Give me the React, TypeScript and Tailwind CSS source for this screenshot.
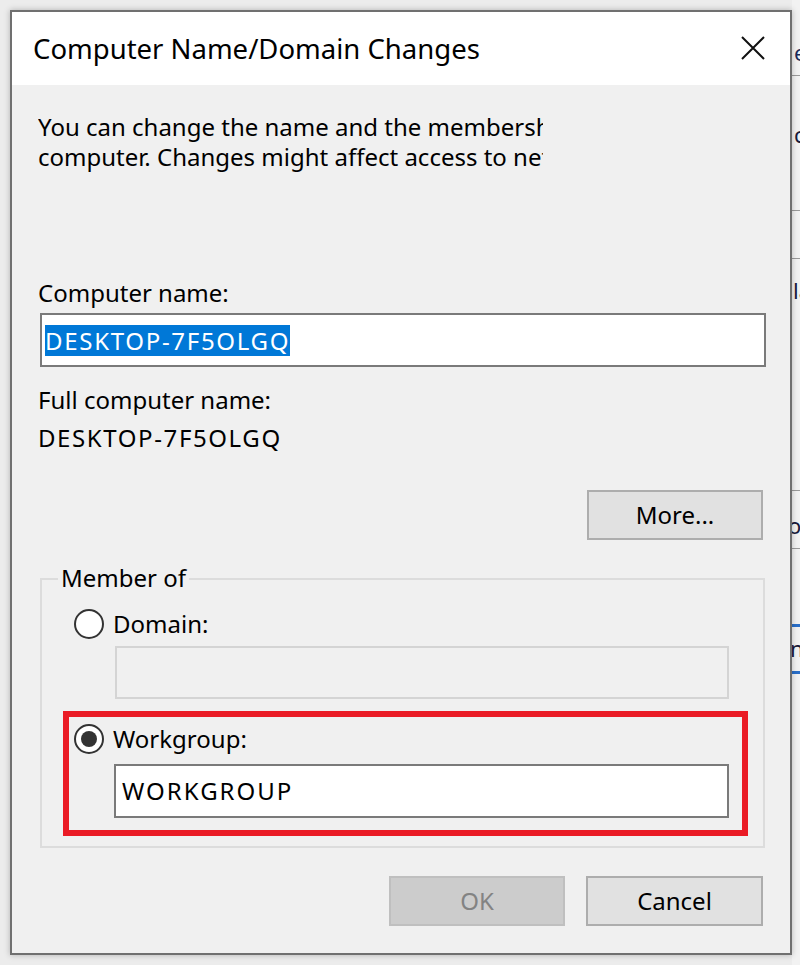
import React from "react";

function Radio({ checked }: { checked?: boolean }) {
  return (
    <div className="w-[30px] h-[30px] rounded-full border-2 border-[#333333] bg-white flex items-center justify-center shrink-0">
      {checked && <div className="w-[16px] h-[16px] rounded-full bg-[#333333]" />}
    </div>
  );
}

export default function App() {
  return (
    <div className="relative w-[800px] h-[965px] overflow-hidden bg-[#ececec] pt-[10px] pl-[10px] font-['Noto_Sans',sans-serif] text-black">
      {/* background window strip on the right */}
      <div className="absolute top-0 right-0 w-[8px] h-full bg-[#f2f2f2] overflow-hidden">
        <div className="absolute left-[2px] top-[40px] text-[22px] leading-[24px] text-[#1a2a5a]">er</div>
        <div className="absolute left-0 top-[75px] w-full h-[1px] bg-[#9a9a9a]" />
        <div className="absolute left-[2px] top-[122px] text-[22px] leading-[24px] text-[#1a1a3a]">c</div>
        <div className="absolute left-0 top-[210px] w-full h-[1px] bg-[#9a9a9a]" />
        <div className="absolute left-0 top-[258px] w-full h-[1px] bg-[#9a9a9a]" />
        <div className="absolute left-[1px] top-[278px] text-[22px] leading-[24px] text-[#1a1a3a]">la</div>
        <div className="absolute left-0 top-[490px] w-full h-[1px] bg-[#9a9a9a]" />
        <div className="absolute left-[-4px] top-[513px] text-[22px] leading-[24px] text-[#1a1a3a]">o</div>
        <div className="absolute left-0 top-[548px] w-full h-[1px] bg-[#9a9a9a]" />
        <div className="absolute left-0 top-[624px] w-full h-[3px] bg-[#2a6fc9]" />
        <div className="absolute left-[-2px] top-[636px] text-[22px] leading-[24px] text-[#1a1a3a]">n</div>
        <div className="absolute left-0 top-[671px] w-full h-[3px] bg-[#2a6fc9]" />
      </div>

      {/* dialog */}
      <div className="relative w-[782px] h-[945px] border-2 border-[#707070] shadow-[0_0_6px_rgba(0,0,0,0.25)] flex flex-col bg-[#f0f0f0]">
        {/* title bar */}
        <div className="h-[73px] bg-white flex items-center justify-between pl-[21px] pr-[25px] shrink-0">
          <div className="text-[27.5px] leading-[36px] whitespace-nowrap">Computer Name/Domain Changes</div>
          <svg width="24" height="24" viewBox="0 0 24 24" className="mt-[-2px]">
            <path d="M1 1 L23 23 M23 1 L1 23" stroke="#111" strokeWidth="2" fill="none" />
          </svg>
        </div>

        {/* body */}
        <div className="flex-1 flex flex-col pl-[26px] pr-[27px] text-[24px] leading-[30px]">
          <div className="mt-[27px] w-[505px] overflow-hidden whitespace-nowrap">
            <div>You can change the name and the membership of this</div>
            <div>computer. Changes might affect access to network resources.</div>
          </div>

          <div className="mt-[106px]">Computer name:</div>
          <div className="mt-[5px] ml-[2px] w-[726px] h-[54px] border-2 border-[#7a7a7a] bg-white flex items-center pl-[3px]">
            <span className="bg-[#0078d7] text-white leading-[31px] tracking-[1.7px]">DESKTOP-7F5OLGQ</span>
          </div>

          <div className="mt-[18px]">Full computer name:</div>
          <div className="mt-[8px] tracking-[1.6px]">DESKTOP-7F5OLGQ</div>

          <div className="mt-[37px] flex justify-end">
            <div className="w-[176px] h-[50px] border-2 border-[#adadad] bg-[#e1e1e1] flex items-center justify-center">
              More...
            </div>
          </div>

          {/* group box */}
          <div className="relative mt-[38px] ml-[2px] w-[725px] h-[270px] border-2 border-[#dcdcdc] flex flex-col">
            <div className="absolute top-[-14px] left-[16px] px-[3px] bg-[#f0f0f0] leading-[24px]">Member of</div>

            <div className="mt-[29px] pl-[32px] flex items-center gap-[9px]">
              <Radio />
              <span>Domain:</span>
            </div>
            <div className="mt-[7px] ml-[73px] w-[614px] h-[53px] border-2 border-[#d4d4d4] bg-[#f0f0f0]" />

            <div className="mt-[12px] ml-[21px] w-[685px] h-[125px] border-[6px] border-[#ea1b25] flex flex-col">
              <div className="mt-[7px] ml-[5px] flex items-center gap-[9px]">
                <Radio checked />
                <span>Workgroup:</span>
              </div>
              <div className="mt-[10px] ml-[45px] w-[615px] h-[54px] border-2 border-[#7a7a7a] bg-white flex items-center pl-[6px] tracking-[2px]">
                WORKGROUP
              </div>
            </div>
          </div>

          <div className="mt-[28px] flex justify-end gap-[21px]">
            <div className="w-[176px] h-[50px] border-2 border-[#bfbfbf] bg-[#cccccc] text-[#838383] flex items-center justify-center">
              OK
            </div>
            <div className="w-[177px] h-[50px] border-2 border-[#adadad] bg-[#e1e1e1] flex items-center justify-center">
              Cancel
            </div>
          </div>
        </div>
      </div>
    </div>
  );
}
